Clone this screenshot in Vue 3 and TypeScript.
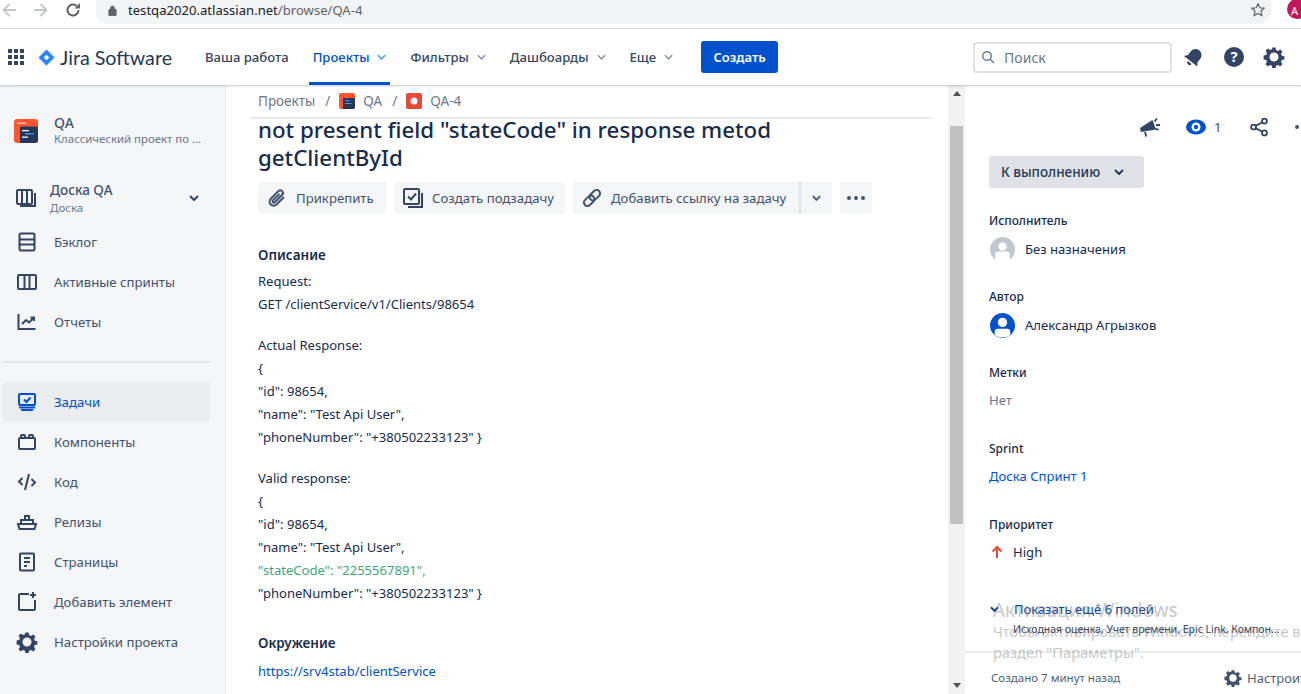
<script setup lang="ts">
interface SideItem { label: string; d: string; active?: boolean }
const sideTop: SideItem[] = [
  { label: 'Бэклог', d: 'M5 2.500h12a1.500 1.500 0 0 1 1.500 1.500v3a1.500 1.500 0 0 1-1.500 1.500H5A1.500 1.500 0 0 1 3.500 7V4A1.500 1.500 0 0 1 5 2.500zM3.500 8.500h15v5h-15zM5 13.500h12a1.500 1.500 0 0 1 1.500 1.500v3a1.500 1.500 0 0 1-1.500 1.500H5A1.500 1.500 0 0 1 3.500 18v-3A1.500 1.500 0 0 1 5 13.500z' },
  { label: 'Активные спринты', d: 'M3 4h16a1 1 0 0 1 1 1v12a1 1 0 0 1-1 1H3a1 1 0 0 1-1-1V5a1 1 0 0 1 1-1zM8.500 4v14M13.500 4v14' },
  { label: 'Отчеты', d: 'M2.500 3v15h17M6 13l4-4 3 2.500 5-5M14.500 6.500H18V10' },
]
const sideBottom: SideItem[] = [
  { label: 'Задачи', active: true, d: 'M4 3h14a1 1 0 0 1 1 1v9a1 1 0 0 1-1 1H4a1 1 0 0 1-1-1V4a1 1 0 0 1 1-1zM8 8.500l2.500 2.500 4-4.500M3 16.500h16M5 19h12' },
  { label: 'Компоненты', d: 'M4 7h14a1 1 0 0 1 1 1v9a1 1 0 0 1-1 1H4a1 1 0 0 1-1-1V8a1 1 0 0 1 1-1zM5 7V5a1 1 0 0 1 1-1h2a1 1 0 0 1 1 1v2M13 7V5a1 1 0 0 1 1-1h2a1 1 0 0 1 1 1v2' },
  { label: 'Код', d: 'M6.500 7L3 10.500 6.500 14M15.500 8l3.500 3.500-3.500 3.500M13 3L9 19' },
  { label: 'Релизы', d: 'M2 13h18l-1.500 5h-15zM5 13V9h12v4M9 9V5h4v4' },
  { label: 'Страницы', d: 'M5 2.500h12a1 1 0 0 1 1 1v15a1 1 0 0 1-1 1H5a1 1 0 0 1-1-1v-15a1 1 0 0 1 1-1zM8 7h6M8 11h6M8 15h3' },
  { label: 'Добавить элемент', d: 'M13 3H4a1 1 0 0 0-1 1v14a1 1 0 0 0 1 1h14a1 1 0 0 0 1-1V9M17 1v6M14 4h6' },
]
const gear = 'M9.400 1.500h3.200l.5 2.600 1.900.8 2.200-1.500 2.300 2.300-1.500 2.200.8 1.900 2.600.5v3.200l-2.600.5-.8 1.900 1.500 2.200-2.300 2.300-2.200-1.500-1.900.8-.5 2.600H9.400l-.5-2.600-1.900-.8-2.200 1.500-2.300-2.300 1.500-2.200-.8-1.900-2.600-.5V9.400l2.600-.5.8-1.900-1.500-2.200 2.300-2.300 2.200 1.500 1.900-.8zM11 6.500a4.500 4.500 0 1 0 0 9 4.500 4.500 0 0 0 0-9z'
const nav = [
  { label: 'Ваша работа', chevron: false },
  { label: 'Проекты', chevron: true, active: true },
  { label: 'Фильтры', chevron: true },
  { label: 'Дашбоарды', chevron: true },
  { label: 'Еще', chevron: true },
]
const description: string[][] = [
  ['Request:', 'GET /clientService/v1/Clients/98654'],
  ['Actual Response:', '{', '"id": 98654,', '"name": "Test Api User",', '"phoneNumber": "+380502233123" }'],
  ['Valid response:', '{', '"id": 98654,', '"name": "Test Api User",', '"stateCode": "2255567891",', '"phoneNumber": "+380502233123" }'],
]
</script>

<template>
  <div class="page">
    <div class="browser">
      <svg class="b-ico" viewBox="0 0 16 16"><path d="M15 8H2.500M8.500 2L2.500 8l6 6" fill="none" stroke="#c4c7ca" stroke-width="1.800" /></svg>
      <svg class="b-ico" viewBox="0 0 16 16"><path d="M1 8h12.500M7.500 2l6 6-6 6" fill="none" stroke="#c4c7ca" stroke-width="1.800" /></svg>
      <svg class="b-ico" viewBox="0 0 16 16"><path d="M13.500 8a5.500 5.500 0 1 1-1.600-3.900" fill="none" stroke="#5f6368" stroke-width="2" /><path d="M15 1v5.500H9.500z" fill="#5f6368" /></svg>
      <div class="url">
        <svg class="lock" viewBox="0 0 10 12"><path d="M1 5h8v6.500H1zM3 5V3a2 2 0 0 1 4 0v2" fill="#5f6368" stroke="#5f6368" /></svg>
        <span class="host">testqa2020.atlassian.net</span><span class="path">/browse/QA-4</span>
        <svg class="star" viewBox="0 0 16 16"><path d="M8 1.800l1.900 4 4.300.5-3.200 3 .9 4.300L8 11.500l-3.900 2.100.9-4.300-3.200-3 4.300-.5z" fill="none" stroke="#5f6368" stroke-width="1.200" /></svg>
      </div>
      <div class="avatar">A</div>
    </div>

    <header class="top">
      <svg class="apps" viewBox="0 0 16 16"><path d="M0 0h4v4H0zM6 0h4v4H6zM12 0h4v4h-4zM0 6h4v4H0zM6 6h4v4H6zM12 6h4v4h-4zM0 12h4v4H0zM6 12h4v4H6zM12 12h4v4h-4z" fill="#344563" /></svg>
      <svg class="logo" viewBox="0 0 18 18"><path d="M9 .500L17.500 9 9 17.500.5 9z" fill="#2684ff" /><path d="M9 6l3 3-3 3-3-3z" fill="#fff" /></svg>
      <span class="brand">Jira Software</span>
      <nav class="nav">
        <div v-for="n in nav" :key="n.label" class="nav-item" :class="{ on: n.active }">
          {{ n.label }}
          <svg v-if="n.chevron" class="chev" viewBox="0 0 10 6"><path d="M1 1l4 4 4-4" fill="none" stroke="currentColor" stroke-width="1.700" /></svg>
        </div>
      </nav>
      <button class="create">Создать</button>
      <div class="search">
        <svg class="s-ico" viewBox="0 0 14 14"><circle cx="6" cy="6" r="4.300" fill="none" stroke="#6b778c" stroke-width="1.400" /><path d="M9.200 9.200L13 13" stroke="#6b778c" stroke-width="1.400" /></svg>
        <span>Поиск</span>
      </div>
      <div class="top-icons">
        <svg viewBox="0 0 22 22"><g transform="rotate(38 11 11)"><path d="M11 2.500a6 6 0 0 1 6 6v4.500l2.500 3.500h-17L5 13V8.500a6 6 0 0 1 6-6z" fill="#344563" /><path d="M8.500 18h5a2.500 2.500 0 0 1-5 0z" fill="#344563" /></g></svg>
        <svg viewBox="0 0 22 22"><circle cx="11" cy="11" r="10" fill="#344563" /><text x="11" y="16" text-anchor="middle" class="q">?</text></svg>
        <svg viewBox="0 0 22 22"><path :d="gear" fill="#344563" fill-rule="evenodd" /></svg>
      </div>
    </header>

    <div class="body">
      <aside class="side">
        <div class="project">
          <svg class="p-ico" viewBox="0 0 24 24">
            <rect width="24" height="24" rx="3" fill="#ff5630" />
            <path d="M6 7.500h18V21a3 3 0 0 1-3 3H6z" fill="#253858" />
            <path d="M8 11h7v1.300H8zM8 17.500h6v1.300H8z" fill="#fff" />
            <path d="M11 14.200h9v1.300h-9z" fill="#4c9aff" />
            <path d="M3 3.500h9v1.500H3z" fill="#ffbdad" />
          </svg>
          <div>
            <div class="p-name">QA</div>
            <div class="p-sub">Классический проект по ...</div>
          </div>
        </div>
        <div class="board">
          <svg class="s-icon" viewBox="0 0 22 22"><path d="M3 3h13a1 1 0 0 1 1 1v12a1 1 0 0 1-1 1H3a1 1 0 0 1-1-1V4a1 1 0 0 1 1-1zM7 3v14M12 3v14M20 6v13H5" fill="none" stroke="#344563" stroke-width="2" /></svg>
          <div class="b-text">
            <div class="b-name">Доска QA</div>
            <div class="b-sub">Доска</div>
          </div>
          <svg class="b-chev" viewBox="0 0 10 6"><path d="M1 1l4 4 4-4" fill="none" stroke="#344563" stroke-width="2" /></svg>
        </div>
        <div class="s-list">
          <div v-for="i in sideTop" :key="i.label" class="s-item">
            <svg class="s-icon" viewBox="0 0 22 22"><path :d="i.d" fill="none" stroke="#344563" stroke-width="2" /></svg>
            <span>{{ i.label }}</span>
          </div>
        </div>
        <div class="s-div"></div>
        <div class="s-list">
          <div v-for="i in sideBottom" :key="i.label" class="s-item" :class="{ on: i.active }">
            <svg class="s-icon" viewBox="0 0 22 22"><path :d="i.d" fill="none" stroke="currentColor" stroke-width="2" /></svg>
            <span>{{ i.label }}</span>
          </div>
          <div class="s-item">
            <svg class="s-icon" viewBox="0 0 22 22"><path :d="gear" fill="#344563" fill-rule="evenodd" /></svg>
            <span>Настройки проекта</span>
          </div>
        </div>
      </aside>

      <main class="main">
        <div class="crumbs">
          <span>Проекты</span><span class="sl">/</span>
          <svg class="c-ico" viewBox="0 0 24 24">
            <rect width="24" height="24" rx="3" fill="#ff5630" />
            <path d="M6 7.500h18V21a3 3 0 0 1-3 3H6z" fill="#253858" />
            <path d="M9 11h7v1.500H9zM9 15h10v1.500H9z" fill="#4c9aff" />
          </svg>
          <span>QA</span><span class="sl">/</span>
          <svg class="c-ico bug" viewBox="0 0 16 16"><rect width="16" height="16" rx="2" fill="#e5493a" /><circle cx="8" cy="8" r="3.500" fill="#fff" /></svg>
          <span>QA-4</span>
        </div>
        <div class="content">
          <h1>not present field "stateCode" in response metod getClientById</h1>
          <div class="actions">
            <button class="act w-attach">
              <svg viewBox="0 0 22 22"><path d="M18 10l-7.500 7.500a4 4 0 0 1-5.700-5.700L12.500 4a2.700 2.700 0 0 1 3.800 3.800l-7.500 7.500a1.300 1.300 0 0 1-1.900-1.900L13.500 7" fill="none" stroke="#42526e" stroke-width="2" /></svg>
              Прикрепить
            </button>
            <button class="act w-sub">
              <svg viewBox="0 0 22 22"><path d="M3 2h13a1 1 0 0 1 1 1v13a1 1 0 0 1-1 1H3a1 1 0 0 1-1-1V3a1 1 0 0 1 1-1zM6 9.500l3 3 5-6M20 6v14H6" fill="none" stroke="#344563" stroke-width="2" /></svg>
              Создать подзадачу
            </button>
            <div class="split">
              <button class="act main-act">
                <svg viewBox="0 0 22 22"><g transform="rotate(-45 11 11)" fill="none" stroke="#42526e" stroke-width="2"><rect x="1" y="7.500" width="12" height="7" rx="3.500" /><rect x="9" y="7.500" width="12" height="7" rx="3.500" /></g></svg>
                Добавить ссылку на задачу
              </button>
              <button class="act small">
                <svg class="mini" viewBox="0 0 10 6"><path d="M1 1l4 4 4-4" fill="none" stroke="#42526e" stroke-width="2" /></svg>
              </button>
            </div>
            <button class="act small dots"><i></i><i></i><i></i></button>
          </div>

          <h2>Описание</h2>
          <div class="desc">
            <p v-for="(block, b) in description" :key="b">
              <span v-for="line in block" :key="line" class="line" :class="{ green: line.includes('stateCode') }">{{ line }}</span>
            </p>
          </div>
          <h2 class="env">Окружение</h2>
          <a class="env-link">https://srv4stab/clientService</a>
        </div>
      </main>

      <div class="scroll">
        <span class="arr up"></span>
        <div class="thumb"></div>
        <span class="arr down"></span>
      </div>

      <section class="panel">
        <div class="p-top">
          <svg class="mega" viewBox="0 0 22 22"><path d="M13.500 4L1 12l1 4 15-2.500z" fill="#344563" /><path d="M15.500 5.500L18 2.500M17 9h4M16.500 12.500l3 1.500M6 16l1.200 4.500" stroke="#344563" stroke-width="1.800" fill="none" /></svg>
          <div class="watch">
            <svg viewBox="0 0 20 16"><ellipse cx="10" cy="8" rx="10" ry="7.500" fill="#0052cc" /><circle cx="10" cy="8" r="4.500" fill="#fff" /><circle cx="10" cy="8" r="2.200" fill="#0052cc" /></svg>
            <span>1</span>
          </div>
          <svg class="share" viewBox="0 0 22 22"><circle cx="5" cy="11" r="2.700" fill="none" stroke="#344563" stroke-width="2" /><circle cx="17" cy="4.500" r="2.700" fill="none" stroke="#344563" stroke-width="2" /><circle cx="17" cy="17.500" r="2.700" fill="none" stroke="#344563" stroke-width="2" /><path d="M7.300 9.800l7.400-4M7.300 12.200l7.400 4" stroke="#344563" stroke-width="2" /></svg>
          <div class="p-dots"><i></i><i></i><i></i></div>
        </div>
        <button class="status">
          К выполнению
          <svg viewBox="0 0 10 6"><path d="M1 1l4 4 4-4" fill="none" stroke="#253858" stroke-width="2" /></svg>
        </button>
        <div class="field">
          <div class="f-label">Исполнитель</div>
          <div class="f-value">
            <svg class="person" viewBox="0 0 24 24"><circle cx="12" cy="12" r="12" fill="#c1c7d0" /><circle cx="12" cy="9" r="4" fill="#fff" /><path d="M5 24v-7a3 3 0 0 1 3-3h8a3 3 0 0 1 3 3v7z" fill="#fff" /></svg>
            Без назначения
          </div>
        </div>
        <div class="field">
          <div class="f-label">Автор</div>
          <div class="f-value">
            <svg class="person" viewBox="0 0 24 24"><circle cx="12" cy="12" r="12" fill="#0052cc" /><circle cx="12" cy="9" r="4.500" fill="#fff" /><path d="M4.500 21v-3a3 3 0 0 1 3-3h9a3 3 0 0 1 3 3v3a12 12 0 0 1-15 0z" fill="#fff" /></svg>
            Александр Агрызков
          </div>
        </div>
        <div class="field">
          <div class="f-label">Метки</div>
          <div class="f-value muted">Нет</div>
        </div>
        <div class="field">
          <div class="f-label">Sprint</div>
          <div class="f-value link">Доска Спринт 1</div>
        </div>
        <div class="field">
          <div class="f-label">Приоритет</div>
          <div class="f-value lift">
            <svg class="prio" viewBox="0 0 12 14"><path d="M6 13V2M1.500 6.500L6 2l4.500 4.500" fill="none" stroke="#e5493a" stroke-width="2" /></svg>
            High
          </div>
        </div>
        <div class="more">
          <div class="more-a">
            <svg viewBox="0 0 10 7"><path d="M1 1l4 4 4-4" fill="none" stroke="#0747a6" stroke-width="2.200" /></svg>
            <span>Показать ещё 6 полей</span>
          </div>
          <div class="more-b">Исходная оценка, Учет времени, Epic Link, Компон...</div>
        </div>
        <div class="foot">
          <span>Создано 7 минут назад</span>
          <span class="conf">
            <svg viewBox="0 0 22 22"><path :d="gear" fill="#42526e" fill-rule="evenodd" /></svg>
            Настроить
          </span>
        </div>
        <div class="winmark">
          <div class="w1">Активация Windows</div>
          <div class="w2">Чтобы активировать Windows, перейдите в раздел "Параметры".</div>
        </div>
      </section>
    </div>
  </div>
</template>

<style>
html, body { margin: 0; overflow: hidden; background: #fff; }
</style>

<style scoped>
* { box-sizing: border-box; }
.page {
  width: 1301px; height: 694px; overflow: hidden; display: flex; flex-direction: column;
  font-family: "Noto Sans", "Open Sans", "Liberation Sans", sans-serif;
  font-size: 13px; color: #172b4d; background: #fff;
}
.browser { height: 29px; flex: none; display: flex; align-items: flex-start; padding-left: 1px; border-bottom: 1px solid #dadce0; background: #fff; }
.b-ico { width: 16px; height: 16px; margin: 2px 16px 0 0; flex: none; }
.url { width: 1175px; flex: none; height: 24px; margin-left: -1px; background: #f1f3f4; border-radius: 0 0 12px 12px; display: flex; align-items: center; padding: 0 8px 4px 12px; font-size: 13.100px; color: #202124; }
.lock { width: 9px; height: 11px; margin-right: 11px; }
.path { color: #5f6368; }
.star { width: 16px; height: 16px; margin-left: auto; margin-right: -3px; }
.avatar { width: 20px; height: 20px; flex: none; margin: -1px 0 0 16px; border-radius: 50%; background: #c2185b; color: #fff; font-size: 11px; line-height: 24px; padding-left: 4px; }

.top { height: 56px; flex: none; display: flex; align-items: center; background: #fff; box-shadow: 0 1px 2px rgba(9,30,66,.25); position: relative; z-index: 2; padding-left: 8px; }
.apps { width: 16px; height: 16px; flex: none; }
.logo { width: 17px; height: 17px; margin-left: 14px; flex: none; }
.brand { margin-left: 5px; width: 141px; font-family: "Lato", sans-serif; font-size: 19.700px; color: #253858; white-space: nowrap; }
.nav { display: flex; height: 56px; }
.nav-item { display: flex; align-items: center; padding: 0 4px; margin-right: 16px; font-size: 13.100px; font-weight: 500; color: #344563; white-space: nowrap; position: relative; }
.nav-item.on { color: #0052cc; }
.nav-item.on::after { content: ""; position: absolute; left: 0; right: 0; bottom: 0; height: 3px; background: #0052cc; }
.chev { width: 9px; height: 6px; margin-left: 8px; color: #8993a4; }
.nav-item.on .chev { color: #4c9aff; }
.create { width: 77px; height: 32px; flex: none; border: 0; border-radius: 3px; background: #0052cc; color: #fff; font: 600 13px "Noto Sans", sans-serif; margin-left: 8px; }
.search { width: 199px; height: 31px; flex: none; margin-left: 195px; border: 2px solid #dfe1e6; border-radius: 4px; display: flex; align-items: center; padding-left: 6px; color: #6b778c; font-size: 14px; }
.s-ico { width: 14px; height: 14px; margin-right: 9px; }
.top-icons { display: flex; margin-left: 11px; gap: 18px; }
.top-icons svg { width: 22px; height: 22px; }
.q { font: 700 15px "Noto Sans", sans-serif; fill: #fff; }

.body { flex: 1; display: flex; min-height: 0; }
.side { width: 226px; flex: none; background: #f4f5f7; border-right: 1px solid #ebecf0; padding-top: 30px; }
.project { display: flex; align-items: center; padding-left: 14px; gap: 16px; height: 31px; }
.p-ico { width: 24px; height: 24px; flex: none; }
.p-name { font-size: 14px; font-weight: 500; color: #42526e; line-height: 16px; }
.p-sub { font-size: 11.400px; color: #6b778c; line-height: 15px; }
.board { display: flex; align-items: center; height: 36px; margin-top: 34px; padding-left: 15px; }
.board .s-icon { margin-right: 13px; }
.b-text { width: 139px; }
.b-name { font-size: 13.500px; font-weight: 500; color: #42526e; line-height: 20px; }
.b-sub { font-size: 11.500px; color: #6b778c; line-height: 16px; }
.b-chev { width: 10px; height: 6px; }
.s-list { display: flex; flex-direction: column; margin-top: 6px; }
.s-item { width: 208px; height: 40px; margin-left: 2px; display: flex; align-items: center; padding-left: 14px; font-size: 13.200px; color: #42526e; border-radius: 3px; }
.s-item .s-icon { margin-right: 16px; color: #344563; }
.s-item.on { background: #ebecf0; color: #0052cc; }
.s-item.on .s-icon { color: #0052cc; }
.s-icon { width: 22px; height: 22px; flex: none; }
.s-div { width: 208px; height: 2px; margin: 19px 0 19px 2px; background: #e4e6ea; }

.main { width: 722px; flex: none; padding: 5px 16px 0 24px; overflow: hidden; }
.crumbs { height: 29px; display: flex; align-items: center; padding: 0 0 6px 8px; border-bottom: 2px solid #ebecf0; color: #6b778c; font-size: 13.500px; }
.sl { margin: 0 10px; }
.c-ico { width: 16px; height: 16px; margin-right: 8px; margin-left: -1px; }
.content { padding-left: 8px; margin-top: -3px; }
h1 { margin: 0; width: 640px; font-size: 22.300px; line-height: 28px; font-weight: 500; color: #172b4d; }
.actions { display: flex; margin-top: 10px; gap: 8px; }
.act { height: 32px; border: 0; border-radius: 3px; background: #f4f5f7; display: flex; align-items: center; gap: 8px; padding: 0 0 0 8px; font: 13.200px "Noto Sans", sans-serif; color: #42526e; white-space: nowrap; }
.act svg { width: 22px; height: 22px; flex: none; }
.w-attach { width: 128px; }
.w-sub { width: 171px; }
.split { display: flex; }
.main-act { border-radius: 3px 0 0 3px; width: 226px; }
.small { width: 32px; padding: 0; justify-content: center; }
.split .small { width: 33px; border-radius: 0 3px 3px 0; border-left: 2px solid #dfe1e6; }
.act .mini { width: 9px; height: 6px; }
.dots { gap: 3px; }
.dots i, .p-dots i { width: 4px; height: 4px; border-radius: 50%; background: #42526e; display: block; }
h2 { margin: 31px 0 0; font-size: 13.500px; line-height: 20px; font-weight: 600; color: #172b4d; }
.desc { margin-top: 5px; font-size: 13.050px; color: #172b4d; }
.desc p { margin: 0 0 18px; }
.line { display: block; line-height: 23px; }
.green { color: #3fa57a; }
.env { margin-top: 28px; }
.env-link { display: block; margin-top: 8px; font-size: 13px; line-height: 20px; color: #0052cc; }

.scroll { width: 17px; flex: none; background: #f1f1f1; position: relative; padding: 41px 2px 0; }
.thumb { height: 398px; background: #c1c1c1; }
.arr { position: absolute; left: 5px; width: 0; height: 0; border-left: 4px solid transparent; border-right: 4px solid transparent; }
.up { top: 6px; border-bottom: 5px solid #505050; }
.down { bottom: 6px; border-top: 5px solid #505050; }

.panel { flex: 1; position: relative; padding: 0 0 0 24px; min-width: 0; overflow: hidden; }
.p-top { height: 71px; display: flex; align-items: flex-end; padding: 0 0 18px 150px; width: 360px; }
.mega { width: 22px; height: 22px; flex: none; }
.watch { display: flex; align-items: center; gap: 8px; margin-left: 25px; color: #42526e; font-size: 13px; height: 22px; width: 44px; flex: none; }
.watch svg { width: 20px; height: 16px; flex: none; }
.share { width: 20px; height: 22px; margin-left: 19px; flex: none; }
.p-dots { display: flex; gap: 3px; height: 22px; align-items: center; margin-left: 26px; flex: none; }
.status { width: 155px; height: 32px; border: 0; border-radius: 3px; background: #dfe1e6; display: flex; align-items: center; padding-left: 12px; font: 500 13.500px "Noto Sans", sans-serif; color: #253858; white-space: nowrap; }
.status svg { width: 10px; height: 6px; margin-left: 14px; }
.field { height: 76px; padding-top: 24px; }
.f-label { font-size: 12px; line-height: 18px; font-weight: 500; color: #172b4d; }
.f-value { display: flex; align-items: center; height: 24px; margin-top: 7px; gap: 10px; font-size: 13.100px; color: #172b4d; }
.person { width: 25px; height: 25px; margin-left: 1px; }
.muted { color: #6b778c; margin-top: 6px; }
.link { color: #0052cc; margin-top: 6px; }
.lift { margin-top: 6px; }
.prio { width: 12px; height: 14px; margin: 0 0 0 2px; }
.more { margin-top: 31px; }
.more-a { display: flex; align-items: center; gap: 15px; font-size: 13px; line-height: 20px; color: #0747a6; }
.more-a svg { width: 9px; height: 7px; margin-left: 1px; }
.more-b { padding-left: 24px; margin-top: 1px; font-size: 10.500px; line-height: 18px; color: #344563; white-space: nowrap; }
.foot { position: absolute; left: 0; right: 0; top: 566px; height: 42px; border-top: 2px solid #ebecf0; display: flex; align-items: center; padding: 9px 0 0 26px; font-size: 11.500px; color: #505f79; white-space: nowrap; }
.conf { position: absolute; left: 259px; display: flex; align-items: center; gap: 5px; font-size: 13px; }
.conf svg { width: 18px; height: 18px; }
.winmark { position: absolute; left: 28px; top: 514px; width: 312px; color: rgba(110, 110, 110, .40); pointer-events: none; }
.w1 { font-size: 19px; line-height: 22px; }
.w2 { font-size: 14.600px; line-height: 21px; }
</style>
